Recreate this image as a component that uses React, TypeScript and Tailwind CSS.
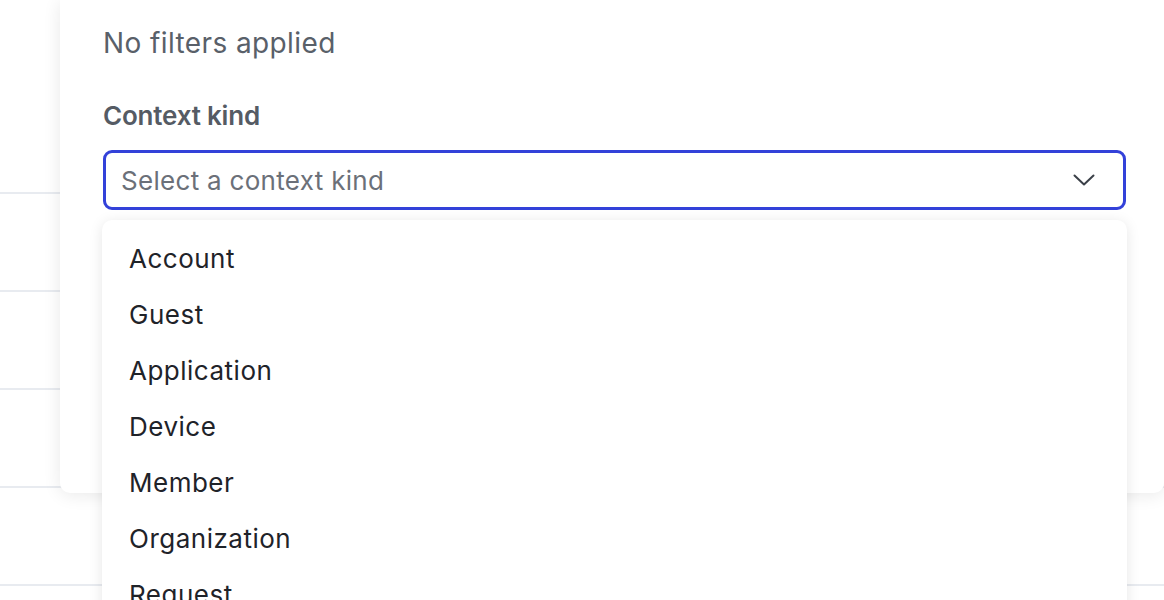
import React from 'react';

const kinds = ['Account', 'Guest', 'Application', 'Device', 'Member', 'Organization', 'Request'];

const Chevron = () => (
  <svg width="22" height="12" viewBox="0 0 22 12" fill="none" className="text-[#3b4048]">
    <polyline points="1.5,1.5 11,10.5 20.5,1.5" stroke="currentColor" strokeWidth="2" strokeLinecap="round" strokeLinejoin="round" />
  </svg>
);

export default function App() {
  return (
    <div className="relative h-[600px] w-full overflow-hidden bg-white font-['Inter','Liberation_Sans',sans-serif]">
      {/* table rows behind the panel */}
      <div className="pt-[96px]">
        {[0, 1, 2, 3, 4].map((i) => (
          <div key={i} className="h-[98px] border-b-2 border-[#e8ebf0]" />
        ))}
      </div>

      {/* filter panel */}
      <div className="absolute left-[60px] right-0 top-0 h-[493px] rounded-b-[10px] bg-white pl-[43px] pr-[38px] pt-[24px] shadow-[0_2px_18px_rgba(0,0,0,0.09)]">
        <p className="text-[28px] leading-[38px] tracking-[0.4px] text-[#596069]">No filters applied</p>

        <label className="mt-[38px] block text-[26px] font-semibold leading-[32px] tracking-[-0.2px] text-[#555b64]">
          Context kind
        </label>

        <div className="relative mt-[18px]">
          <div className="flex h-[60px] items-center justify-between rounded-[9px] border-[3px] border-[#3341d9] pl-[15px] pr-[28px]">
            <span className="text-[26px] tracking-[0.3px] text-[#6b7079]">Select a context kind</span>
            <Chevron />
          </div>

          {/* open dropdown */}
          <div className="absolute left-[-1px] right-[-1px] top-[70px] h-[420px] rounded-[10px] bg-white py-[10px] shadow-[0_2px_14px_rgba(0,0,0,0.1)]">
            {kinds.map((k) => (
              <div key={k} className="flex h-[56px] items-center px-[27px] text-[26px] tracking-[0.5px] text-[#1f2329]">
                {k}
              </div>
            ))}
          </div>
        </div>
      </div>
    </div>
  );
}
